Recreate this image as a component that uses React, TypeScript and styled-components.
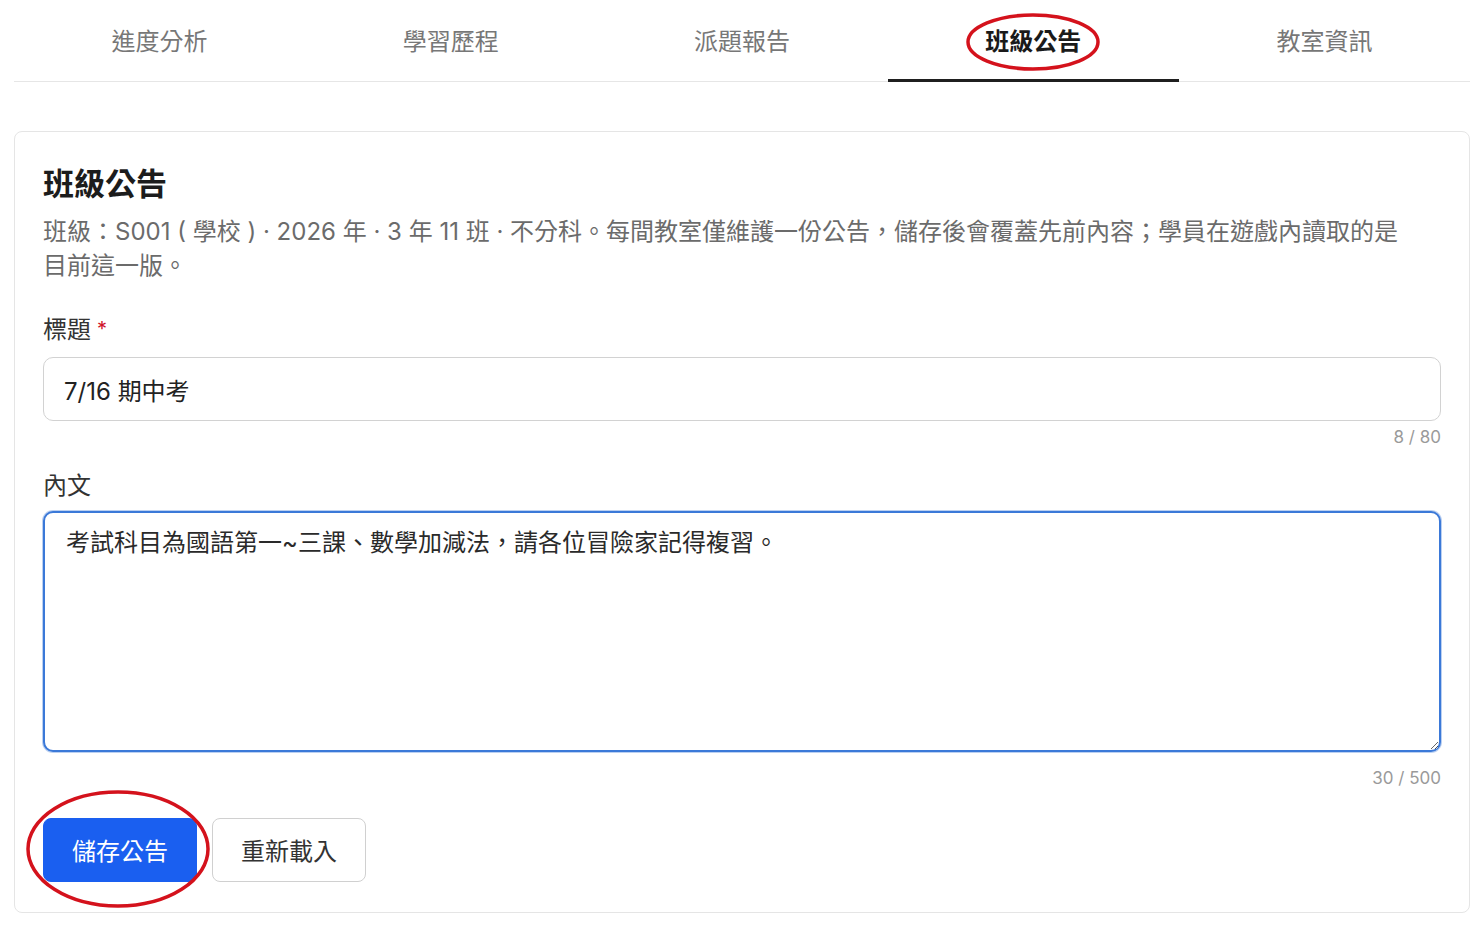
import React, { useState } from 'react';
import styled, { createGlobalStyle } from 'styled-components';

const GlobalStyle = createGlobalStyle`
  html, body {
    margin: 0;
    padding: 0;
    background: #ffffff;
  }
  body {
    font-family: Inter, "Noto Sans CJK TC", "Noto Sans", sans-serif;
    color: #222222;
  }
  * {
    box-sizing: border-box;
  }
`;

const tabs = ['進度分析', '學習歷程', '派題報告', '班級公告', '教室資訊'];

const Page = styled.div`
  padding: 0 8px 0 14px;
`;

const TabBar = styled.nav`
  display: grid;
  grid-template-columns: repeat(5, 1fr);
  border-bottom: 1px solid #e6e6e6;
  height: 82px;
`;

const Tab = styled.button<{ $active?: boolean }>`
  position: relative;
  display: flex;
  align-items: center;
  justify-content: center;
  padding: 2px 0 0;
  border: none;
  background: none;
  font-family: inherit;
  font-size: 24px;
  font-weight: ${(p) => (p.$active ? 700 : 400)};
  color: ${(p) => (p.$active ? '#1a1a1a' : '#777777')};
  cursor: pointer;

  &::after {
    content: '';
    position: absolute;
    left: 0;
    right: 0;
    bottom: -1px;
    height: 3px;
    background: ${(p) => (p.$active ? '#1f1f1f' : 'transparent')};
  }
`;

const TabLabel = styled.span`
  position: relative;
  line-height: 34px;
`;

const Mark = styled.svg`
  position: absolute;
  pointer-events: none;
  overflow: visible;
`;

const Card = styled.section`
  margin-top: 49px;
  border: 1px solid #e5e5e5;
  border-radius: 8px;
  padding: 30px 28px 30px;
  background: #ffffff;
`;

const Title = styled.h2`
  margin: 0;
  font-size: 31px;
  line-height: 43px;
  font-weight: 700;
  color: #1c1c1c;
`;

const Description = styled.p`
  margin: 10px 0 0;
  max-width: 1368px;
  font-size: 24px;
  line-height: 34px;
  color: #6b6b6b;
`;

const Label = styled.label<{ $gap: number }>`
  display: block;
  margin-top: ${(p) => p.$gap}px;
  font-size: 24px;
  line-height: 34px;
  color: #333333;
`;

const Required = styled.span`
  color: #d0122b;
  font-size: 20px;
  margin-left: 6px;
  vertical-align: 2px;
`;

const TextInput = styled.input`
  display: block;
  width: 100%;
  height: 64px;
  margin-top: 10px;
  padding: 0 20px;
  border: 1px solid #d2d2d2;
  border-radius: 10px;
  font-family: inherit;
  font-size: 24px;
  color: #222222;
  background: #ffffff;
  outline: none;
`;

const TextArea = styled.textarea`
  display: block;
  width: 100%;
  height: 241px;
  margin-top: 8px;
  padding: 13px 21px;
  border: 2px solid #3b79d8;
  border-radius: 10px;
  box-shadow: 0 0 0 1px rgba(59, 121, 216, 0.35);
  font-family: inherit;
  font-size: 24px;
  line-height: 34px;
  color: #2a2a2a;
  background: #ffffff;
  outline: none;
  resize: vertical;
`;

const Counter = styled.div<{ $gap: number }>`
  margin-top: ${(p) => p.$gap}px;
  text-align: right;
  font-size: 17px;
  line-height: 24px;
  color: #9a9a9a;
`;

const Actions = styled.div`
  display: flex;
  gap: 15px;
  margin-top: 28px;
`;

const ButtonWrap = styled.div`
  position: relative;
`;

const Button = styled.button<{ $primary?: boolean }>`
  height: 64px;
  padding: 0 28px 2px;
  border-radius: 8px;
  border: 1px solid ${(p) => (p.$primary ? '#1a5ff0' : '#d0d0d0')};
  background: ${(p) => (p.$primary ? '#1a5ff0' : '#ffffff')};
  color: ${(p) => (p.$primary ? '#ffffff' : '#333333')};
  font-family: inherit;
  font-size: 24px;
  cursor: pointer;
`;

const Ellipse = ({ w, h, style }: { w: number; h: number; style: React.CSSProperties }) => (
  <Mark width={w} height={h} viewBox={`0 0 ${w} ${h}`} style={style}>
    <ellipse cx={w / 2} cy={h / 2} rx={w / 2 - 2} ry={h / 2 - 2} fill="none" stroke="#d4121c" strokeWidth="3.5" />
  </Mark>
);

export default function App() {
  const [title, setTitle] = useState('7/16 期中考');
  const [body, setBody] = useState('考試科目為國語第一~三課、數學加減法，請各位冒險家記得複習。');
  const active = '班級公告';

  return (
    <Page>
      <GlobalStyle />
      <TabBar>
        {tabs.map((t) => (
          <Tab key={t} $active={t === active}>
            <TabLabel>
              {t}
              {t === active && <Ellipse w={134} h={58} style={{ left: -19, top: -12 }} />}
            </TabLabel>
          </Tab>
        ))}
      </TabBar>

      <Card>
        <Title>班級公告</Title>
        <Description>
          班級：S001 ( 學校 ) · 2026 年 · 3 年 11 班 · 不分科。每間教室僅維護一份公告，儲存後會覆蓋先前內容；學員在遊戲內讀取的是目前這一版。
        </Description>

        <Label $gap={29}>
          標題<Required>*</Required>
        </Label>
        <TextInput value={title} maxLength={80} onChange={(e) => setTitle(e.target.value)} />
        <Counter $gap={4}>{title.length} / 80</Counter>

        <Label $gap={20}>內文</Label>
        <TextArea value={body} maxLength={500} onChange={(e) => setBody(e.target.value)} />
        <Counter $gap={14}>{body.length} / 500</Counter>

        <Actions>
          <ButtonWrap>
            <Button $primary>儲存公告</Button>
            <Ellipse w={184} h={118} style={{ left: -17, top: -28 }} />
          </ButtonWrap>
          <Button>重新載入</Button>
        </Actions>
      </Card>
    </Page>
  );
}
